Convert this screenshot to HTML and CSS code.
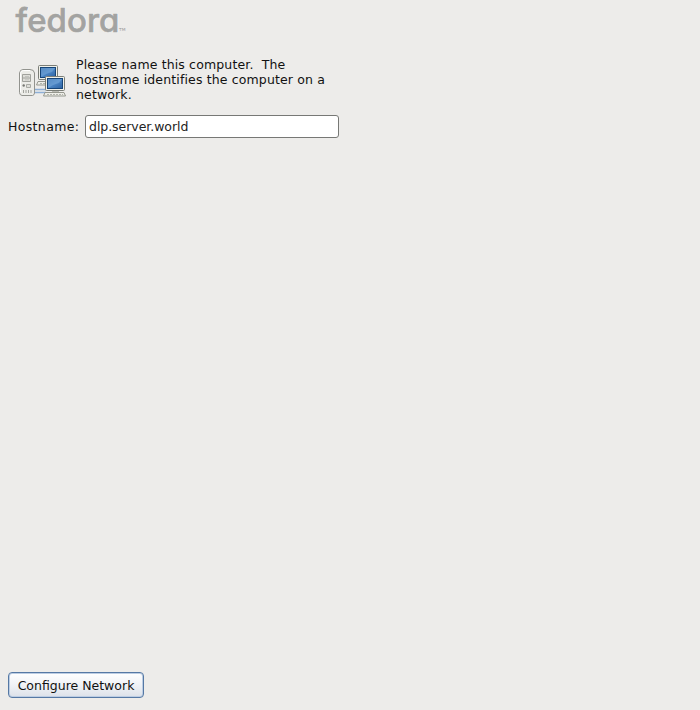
FILE: index.html
```html
<!DOCTYPE html>
<html lang="en">
<head>
<meta charset="utf-8">
<title>Hostname</title>
<link rel="stylesheet" href="styles.css">
</head>
<body>
<main class="installer">
  <header class="brand">
    <svg width="130" height="40" role="img" aria-label="fedora">
      <text class="wordmark highlight" x="16" y="32.3" textLength="104" lengthAdjust="spacingAndGlyphs">fedora</text>
      <text class="wordmark" x="15.5" y="31.5" textLength="104" lengthAdjust="spacingAndGlyphs">fedora</text>
      <text class="tm" x="119" y="31" textLength="6.5" lengthAdjust="spacingAndGlyphs">TM</text>
    </svg>
  </header>
  <section class="intro">
    <svg class="network" width="50" height="36" viewBox="0 0 50 36">
      <defs>
        <linearGradient id="screen" x2="1" y2="1"><stop stop-color="#316bad"/><stop offset=".5" stop-color="#4c86c5"/><stop offset="1" stop-color="#2b609f"/></linearGradient>
        <g id="computer">
          <rect x=".5" y=".5" width="19" height="14" rx="1" fill="#f0f0e9" stroke="#7b7e77"/>
          <rect x="2.5" y="2.5" width="15" height="10" fill="url(#screen)" stroke="#174578"/>
          <path d="M3 3h14l-3 4-6 2-5 3z" fill="#8db9e4" opacity=".4"/>
          <path d="M7 15h7v2H7z" fill="#b9bab3"/>
          <path d="M0 16.500h19l1.500 3.500H-1.500z" fill="#eeeee8" stroke="#96988f"/>
          <path d="M2 18.500h16" stroke="#b2b4ad" stroke-dasharray="2 1"/>
        </g>
      </defs>
      <path d="M18 25.500h11M18 28.500h11" stroke="#8eafd6" stroke-width="1.5"/>
      <path d="M2.500 28.500V9Q3 5.500 6 5.500h7q4 0 4.500 3.500v20q0 2-2 2.500H5q-2.500-.5-2.500-3z" fill="#ecece8" stroke="#92938e"/>
      <path d="M3.500 28V9.500q0-3 3-3H13" fill="none" stroke="#fff"/>
      <path d="M5.500 10.500h8v7h-8zM6 14h7" fill="#deded9" stroke="#a1a29d"/>
      <path d="M8 12.500h4M8 15.800h4" stroke="#c2c3be"/>
      <circle cx="6.700" cy="21.500" r="1.200" fill="#777873"/>
      <path d="M9.500 20.500h4v3h-4z" fill="#deded9" stroke="#a9aaa5"/>
      <path d="M6.500 26v3M9 26v3M11.500 26v3M14 26v3" stroke="#a1a29d"/>
      <use href="#computer" x="21" y="1"/>
      <use href="#computer" x="28" y="12"/>
    </svg>
    <p class="message">Please name this computer.&nbsp; The<br>hostname identifies the computer on a<br>network.</p>
  </section>
  <div class="field">
    <label for="hostname">Hostname:</label>
    <input id="hostname" type="text" value="dlp.server.world" spellcheck="false">
  </div>
  <button class="configure" type="button">Configure Network</button>
</main>
</body>
</html>
```
FILE: styles.css
```css
* { box-sizing: border-box; }
body {
  margin: 0;
  background: #edecea;
  color: #111;
  font: 12.5px/15px "DejaVu Sans", sans-serif;
}
.installer {
  display: flex;
  flex-direction: column;
  height: 710px;
  padding-bottom: 12px;
}
svg { display: block; }
.brand { height: 57px; }
.wordmark {
  font: 500 33px Inter, sans-serif;
  font-feature-settings: "cv11";
  fill: #a3a3a1;
  stroke: #a3a3a1;
  stroke-width: .6px;
  stroke-linejoin: round;
}
.highlight { fill: #fff; stroke: #fff; }
.tm { font: 4px "DejaVu Sans", sans-serif; fill: #999; }
.intro { display: flex; height: 57px; padding-left: 17px; }
.network { margin-top: 7px; overflow: visible; }
.message { margin: 0 0 0 9px; letter-spacing: .14px; white-space: nowrap; }
.field { display: flex; align-items: center; height: 25px; padding-left: 8px; }
.field label { width: 77px; letter-spacing: .35px; }
.field input {
  width: 254px;
  height: 23px;
  padding: 0 3px;
  border: 1px solid #777875;
  border-radius: 3px;
  background: #fff;
  color: #222;
  font: inherit;
  letter-spacing: -.05px;
  outline: none;
}
.configure {
  width: 136px;
  height: 26px;
  margin: auto 0 0 8px;
  padding: 0;
  border: 1px solid #5578a4;
  border-radius: 4px;
  background: linear-gradient(#fff, #f0f2f6 50%, #dce1e9);
  box-shadow: inset 0 0 0 1px #bccde3;
  color: #111;
  font: inherit;
}
```
